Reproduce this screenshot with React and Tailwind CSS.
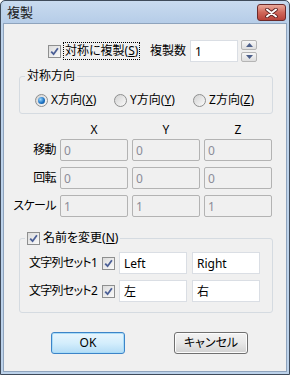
import React from 'react';

const font = "font-['Noto_Sans','Noto_Sans_CJK_JP',sans-serif] [font-feature-settings:'palt']";

function CheckBox() {
  return (
    <span className="flex h-[13px] w-[13px] shrink-0 items-center justify-center border border-[#8e8f8f] bg-gradient-to-br from-[#dcdcdc] to-[#fafafa]">
      <svg width="9" height="9" viewBox="0 0 9 9">
        <path d="M1.2 4.6 L3.6 7.2 L7.9 1.3" fill="none" stroke="#4b5f96" strokeWidth="1.8" />
      </svg>
    </span>
  );
}

function Radio({ checked }) {
  return (
    <span className="flex h-[13px] w-[13px] shrink-0 items-center justify-center rounded-full border border-[#8e8f8f] bg-gradient-to-br from-[#d2d2d2] to-[#fbfbfb]">
      {checked && (
        <span className="h-[7px] w-[7px] rounded-full bg-[radial-gradient(circle_at_35%_35%,#9ad8ff,#1f74c4_55%,#0c4688)]" />
      )}
    </span>
  );
}

function Key({ k }) {
  return (
    <span>
      (<u>{k}</u>)
    </span>
  );
}

function DisabledBox({ value }) {
  return (
    <input
      disabled
      value={value}
      readOnly
      className="h-[22px] w-[68px] rounded-[2px] border border-[#b3b3b3] bg-transparent px-[3px] text-[12px] text-[#8c8c98] outline-none"
    />
  );
}

function TextBox({ value }) {
  return (
    <input
      value={value}
      readOnly
      className="h-[22px] w-[68px] border border-[#dadee4] bg-white px-[4px] text-[12px] text-black outline-none"
    />
  );
}

export default function App() {
  const radios = [
    { axis: 'X', checked: true },
    { axis: 'Y', checked: false },
    { axis: 'Z', checked: false },
  ];
  const rows = [
    { label: '移動', values: ['0', '0', '0'] },
    { label: '回転', values: ['0', '0', '0'] },
    { label: 'スケール', values: ['1', '1', '1'] },
  ];
  const sets = [
    { label: '文字列セット1', a: 'Left', b: 'Right' },
    { label: '文字列セット2', a: '左', b: '右' },
  ];

  return (
    <div className={`${font} flex h-[375px] w-[290px] flex-col rounded-t-[5px] border border-[#3f4b5a] bg-[#bcd2ea] px-[2px] pb-[2px] text-[12px] leading-[16px] text-black`}>
      {/* Title bar */}
      <div className="flex h-[22px] items-start justify-between rounded-t-[4px] bg-gradient-to-b from-[#c9dbef] to-[#b6cde8]">
        <span className="pl-[4px] pt-[3px] text-[13px] leading-[16px] text-[#1b1b1b]">複製</span>
        <button className="mr-[1px] mt-[3px] flex h-[17px] w-[29px] items-center justify-center rounded-[3px] border border-[#6b2a2a] bg-gradient-to-b from-[#e9a99b] via-[#d0675a] to-[#b8423a]">
          <svg width="13" height="10" viewBox="0 0 13 10">
            <path d="M2 1.5 L11 8.5 M11 1.5 L2 8.5" stroke="#5a2020" strokeWidth="3.6" strokeLinecap="round" />
            <path d="M2 1.5 L11 8.5 M11 1.5 L2 8.5" stroke="#ffffff" strokeWidth="2" strokeLinecap="round" />
          </svg>
        </button>
      </div>

      {/* Client area */}
      <div className="flex flex-1 flex-col border border-[#8fa4bd] bg-[#f0f0f0]">
        {/* Copy options */}
        <div className="ml-[44px] mt-[16px] flex h-[22px] items-center">
          <div className="flex w-[102px] items-center">
            <CheckBox />
            <span className="ml-[2px] border border-dotted border-black px-[1px]">
              対称に複製<Key k="S" />
            </span>
          </div>
          <span className="w-[36px]">複製数</span>
          <input
            value="1"
            readOnly
            className="ml-[4px] h-[22px] w-[48px] border border-[#dadee4] bg-white px-[4px] text-[12px] text-black outline-none"
          />
          <div className="ml-[3px] flex h-[22px] flex-col justify-between">
            <span className="flex h-[10px] w-[16px] items-center justify-center rounded-[2px] border border-[#b5b5b5] bg-gradient-to-b from-[#f7f7f7] to-[#dedede]">
              <svg width="7" height="4" viewBox="0 0 7 4"><path d="M0 4 L3.5 0 L7 4 Z" fill="#4c5f8a" /></svg>
            </span>
            <span className="flex h-[10px] w-[16px] items-center justify-center rounded-[2px] border border-[#b5b5b5] bg-gradient-to-b from-[#f7f7f7] to-[#dedede]">
              <svg width="7" height="4" viewBox="0 0 7 4"><path d="M0 0 L3.5 4 L7 0 Z" fill="#4c5f8a" /></svg>
            </span>
          </div>
        </div>

        {/* Direction group */}
        <fieldset className="ml-[15px] mt-[6px] w-[254px] rounded-[3px] border border-[#d5dbe1]">
          <legend className="ml-[5px] px-[2px]">対称方向</legend>
          <div className="mb-[2px] mt-[5px] flex h-[22px] items-center pl-[15px]">
            {radios.map((r) => (
              <div key={r.axis} className="flex w-[79px] items-center">
                <Radio checked={r.checked} />
                <span className="ml-[3px]">
                  {r.axis}方向<Key k={r.axis} />
                </span>
              </div>
            ))}
          </div>
        </fieldset>

        {/* Transform grid */}
        <div className="mt-[8px] flex flex-col gap-[6px]">
          <div className="-mb-[5px] flex h-[16px] gap-[4px] pl-[56px]">
            {['X', 'Y', 'Z'].map((a) => (
              <span key={a} className="w-[68px] text-center">{a}</span>
            ))}
          </div>
          {rows.map((row) => (
            <div key={row.label} className="flex items-center gap-[4px]">
              <span className="w-[52px] whitespace-nowrap text-right tracking-[-0.6px]">{row.label}</span>
              {row.values.map((v, i) => (
                <DisabledBox key={i} value={v} />
              ))}
            </div>
          ))}
        </div>

        {/* Rename group */}
        <fieldset className="ml-[15px] mt-[13px] w-[254px] rounded-[3px] border border-[#d5dbe1] pb-[10px]">
          <legend className="ml-[5px] flex items-center px-[2px]">
            <CheckBox />
            <span className="ml-[3px]">
              名前を変更<Key k="N" />
            </span>
          </legend>
          <div className="mt-[6px] flex flex-col gap-[6px]">
            {sets.map((s) => (
              <div key={s.label} className="flex items-center pl-[9px]">
                <span className="w-[73px] whitespace-nowrap tracking-[-0.7px]">{s.label}</span>
                <CheckBox />
                <span className="ml-[4px]"><TextBox value={s.a} /></span>
                <span className="ml-[5px]"><TextBox value={s.b} /></span>
              </div>
            ))}
          </div>
        </fieldset>

        {/* Buttons */}
        <div className="ml-[47px] mt-[19px] flex gap-[49px]">
          <button className="h-[22px] w-[74px] rounded-[3px] border border-[#3c84c8] bg-gradient-to-b from-[#e8f5fd] via-[#d4eefc] to-[#b3dcf6] text-[12px] shadow-[inset_0_0_0_1px_#a8dcf8]">
            OK
          </button>
          <button className="h-[22px] w-[74px] rounded-[3px] border border-[#707070] bg-gradient-to-b from-[#f3f3f3] via-[#e8e8e8] to-[#d2d2d2] text-[12px] shadow-[inset_0_0_0_1px_#fcfcfc]">
            キャンセル
          </button>
        </div>
      </div>
    </div>
  );
}
